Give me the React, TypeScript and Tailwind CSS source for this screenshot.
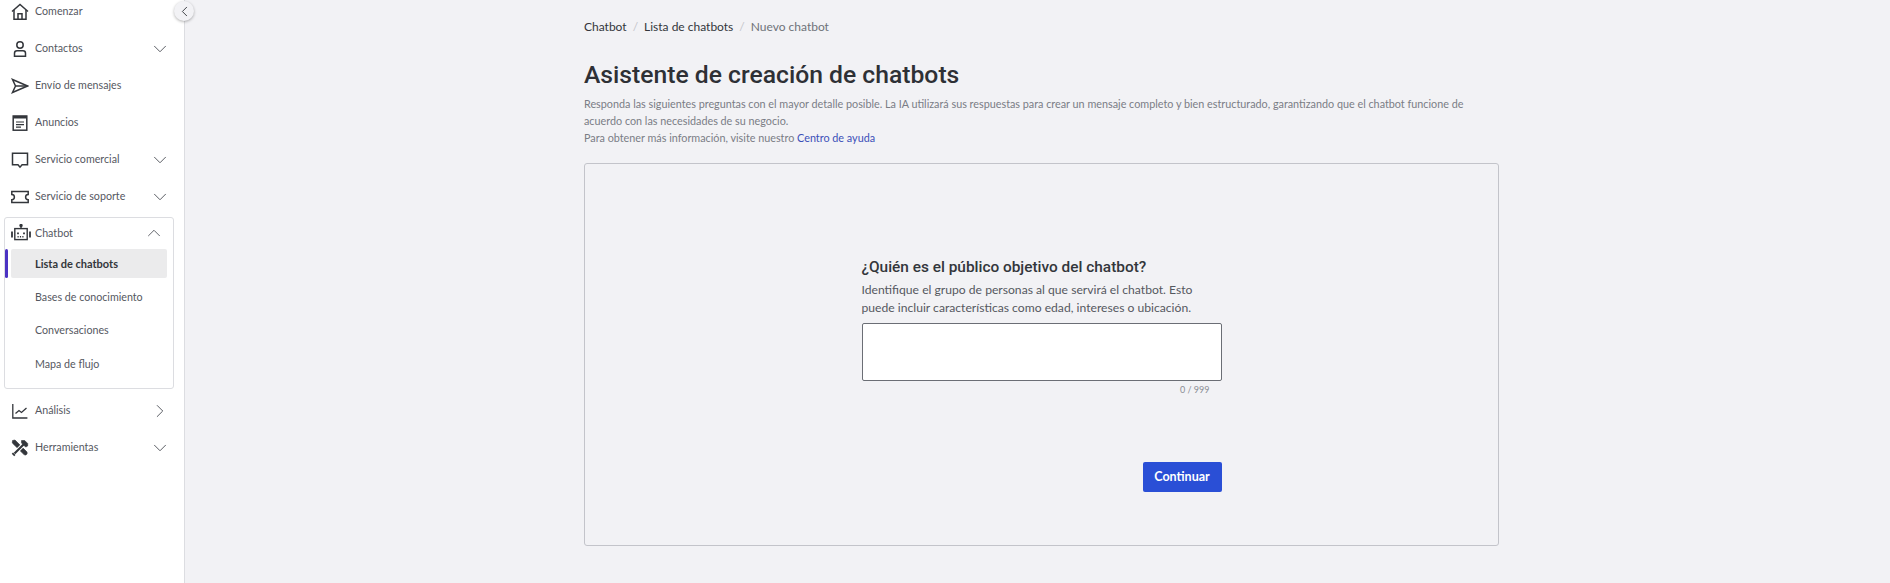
import React from "react";
import { ChevronDown, ChevronLeft, ChevronRight, ChevronUp } from "lucide-react";

const HomeIcon = () => (
  <svg width="18" height="18" viewBox="0 0 18 18" fill="none" stroke="#33363b" strokeWidth="1.5">
    <path d="M1 8.5 9 1.5l8 7" />
    <path d="M3 7v9.2h12V7" />
    <path d="M7 16v-5.2h4V16" />
  </svg>
);

const UserIcon = () => (
  <svg width="18" height="18" viewBox="0 0 18 18" fill="none" stroke="#33363b" strokeWidth="1.5">
    <circle cx="9" cy="5" r="3.2" />
    <path d="M3.5 16.2v-3a2.5 2.5 0 0 1 2.5-2.5h6a2.5 2.5 0 0 1 2.5 2.5v3z" />
  </svg>
);

const SendIcon = () => (
  <svg width="18" height="18" viewBox="0 0 18 18" fill="none" stroke="#33363b" strokeWidth="1.5">
    <path d="M1.5 2.5 16.5 9 1.5 15.5 4.5 9z" />
    <path d="M4.5 9h12" />
  </svg>
);

const NewsIcon = () => (
  <svg width="18" height="18" viewBox="0 0 18 18" fill="none" stroke="#33363b" strokeWidth="1.5">
    <rect x="2.2" y="2" width="13.6" height="14.2" />
    <path d="M2.2 3.2h13.6" strokeWidth="2.6" />
    <path d="M5 8h8M5 10.6h8M5 13.2h5" strokeWidth="1.2" />
  </svg>
);

const ChatIcon = () => (
  <svg width="18" height="18" viewBox="0 0 18 18" fill="none" stroke="#33363b" strokeWidth="1.5">
    <path d="M1.5 2.2h15v11.6h-5.4L9 16.2l-2-2.4H1.5z" />
  </svg>
);

const TicketIcon = () => (
  <svg width="18" height="18" viewBox="0 0 18 18" fill="none" stroke="#33363b" strokeWidth="1.5">
    <path d="M.8 3.5h16.4v3a2.6 2.6 0 0 0 0 5.2v2.8H.8v-2.8a2.6 2.6 0 0 0 0-5.2z" />
  </svg>
);

const RobotIcon = () => (
  <svg width="20" height="18" viewBox="0 0 20 18" fill="none" stroke="#33363b" strokeWidth="1.4">
    <rect x="3.8" y="4.6" width="12.4" height="11" />
    <path d="M10 1.5v3" />
    <circle cx="10" cy="1.5" r="1" fill="#33363b" />
    <path d="M1 7.5v6M19 7.5v6" strokeWidth="1.8" />
    <path d="M7 8.6v1.6M13 8.6v1.6" strokeWidth="1.8" />
    <path d="M6.5 12.8h7" strokeDasharray="1.2 1.2" />
  </svg>
);

const ChartIcon = () => (
  <svg width="18" height="18" viewBox="0 0 18 18" fill="none" stroke="#33363b" strokeWidth="1.3">
    <path d="M1.8 2v14h14.6" />
    <path d="M4.5 11.5 8 8.5l2.5 2 5-4.5" />
  </svg>
);

const ToolsIcon = () => (
  <svg width="18" height="18" viewBox="0 0 18 18" fill="none" stroke="#33363b">
    <path d="M1.5 1.5 4 1l11.8 11.8a2 2 0 0 1-2.8 2.8L1.3 4z" fill="#33363b" strokeWidth="0.6" />
    <path d="M14.5 3.5 3.5 14.5" stroke="#ffffff" strokeWidth="4" />
    <path d="M14.5 3.5 3.5 14.5" strokeWidth="2.2" />
    <path d="M10.5 1.5h3.2l3 3v2.4l-2 1.2-4.2-4.2z" fill="#33363b" strokeWidth="0.6" />
    <path d="M1.4 14.2l2.4 2.4" strokeWidth="1.8" />
  </svg>
);

type NavEntry = { label: string; icon: React.ReactNode; chevron?: "down" | "right" };

const topItems: NavEntry[] = [
  { label: "Comenzar", icon: <HomeIcon /> },
  { label: "Contactos", icon: <UserIcon />, chevron: "down" },
  { label: "Envío de mensajes", icon: <SendIcon /> },
  { label: "Anuncios", icon: <NewsIcon /> },
  { label: "Servicio comercial", icon: <ChatIcon />, chevron: "down" },
  { label: "Servicio de soporte", icon: <TicketIcon />, chevron: "down" },
];

const bottomItems: NavEntry[] = [
  { label: "Análisis", icon: <ChartIcon />, chevron: "right" },
  { label: "Herramientas", icon: <ToolsIcon />, chevron: "down" },
];

const subItems = ["Bases de conocimiento", "Conversaciones", "Mapa de flujo"];

const NavItem = ({ item }: { item: NavEntry }) => (
  <div className="flex h-[37px] items-center pl-[11px] pr-[13px] text-[10.7px] text-[#55585f]">
    <span className="flex w-[24px] shrink-0 justify-start">{item.icon}</span>
    <span className="flex-1">{item.label}</span>
    {item.chevron === "down" && <ChevronDown size={22} strokeWidth={1} className="text-[#4b4f56]" />}
    {item.chevron === "right" && <ChevronRight size={22} strokeWidth={1} className="text-[#4b4f56]" />}
  </div>
);

const App: React.FC = () => {
  return (
    <div className="flex h-[583px] overflow-hidden bg-[#f2f2f5] font-['Lato','Liberation_Sans',sans-serif]">
      <aside className="relative w-[185px] shrink-0 border-r border-[#dcdde1] bg-white">
        <div className="-mt-[7px]">
          {topItems.map((item) => (
            <NavItem key={item.label} item={item} />
          ))}
        </div>

        <div className="mx-[4px] mt-[2px] h-[172px] w-[170px] rounded-[3px] border border-[#dcdde1]">
          <div className="flex h-[30px] items-center pl-[6px] pr-[8px] text-[10.7px] text-[#55585f]">
            <span className="flex w-[24px] shrink-0">
              <RobotIcon />
            </span>
            <span className="flex-1">Chatbot</span>
            <ChevronUp size={22} strokeWidth={1} />
          </div>
          <div className="relative ml-[6px] mr-[6px] mt-[1px] flex h-[29px] items-center rounded-[2px] bg-[#ebebec] pl-[24px] pt-[1px] text-[11px] font-bold text-[#33363b]">
            <span className="absolute -left-[6px] top-0 h-[29px] w-[3px] rounded-[2px] bg-[#4b32c3]" />
            Lista de chatbots
          </div>
          {subItems.map((label, i) => (
            <div
              key={label}
              className={`flex h-[33.5px] items-center pl-[30px] pt-[2px] text-[10.7px] text-[#55585f] ${i === 0 ? "mt-[1px]" : ""}`}
            >
              {label}
            </div>
          ))}
        </div>

        <div className="mt-[3px]">
          {bottomItems.map((item) => (
            <NavItem key={item.label} item={item} />
          ))}
        </div>

        <button className="absolute -right-[10px] top-[1px] flex h-[20px] w-[20px] items-center justify-center rounded-full bg-[#f2f2f5] shadow-[0_1px_3px_rgba(0,0,0,0.3)]">
          <ChevronLeft size={17} strokeWidth={1.3} className="text-[#33363b]" />
        </button>
      </aside>

      <main className="flex-1 pl-[399px]">
        <div className="w-[915px]">
          <nav className="mt-[18px] flex h-[18px] items-center gap-[6px] text-[12px] text-[#33363b]">
            <span>Chatbot</span>
            <span className="text-[#c4c5ca]">/</span>
            <span>Lista de chatbots</span>
            <span className="text-[#c4c5ca]">/</span>
            <span className="text-[#6f7279]">Nuevo chatbot</span>
          </nav>

          <h1 className="mt-[21px] h-[35px] font-['Roboto',sans-serif] text-[24.7px] font-medium leading-[35px] text-[#2e3035]">
            Asistente de creación de chatbots
          </h1>

          <p className="mt-[3px] text-[10.8px] leading-[17px] text-[#7a7d85]">
            Responda las siguientes preguntas con el mayor detalle posible. La IA utilizará sus respuestas para crear un mensaje completo y bien estructurado, garantizando que el chatbot funcione de acuerdo con las necesidades de su negocio.
            <br />
            Para obtener más información, visite nuestro <span className="text-[#3b4fb8]">Centro de ayuda</span>
          </p>

          <section className="mt-[17px] flex h-[383px] w-[915px] justify-center rounded-[3px] border border-[#c3c4ca]">
            <div className="mt-[92px] w-[360px]">
              <h2 className="font-['Roboto',sans-serif] text-[15.4px] font-medium leading-[22px] text-[#33363b]">
                ¿Quién es el público objetivo del chatbot?
              </h2>
              <p className="mt-[3px] text-[12.15px] leading-[18px] text-[#55585f]">
                Identifique el grupo de personas al que servirá el chatbot. Esto puede incluir características como edad, intereses o ubicación.
              </p>
              <textarea className="mt-[6px] block h-[58px] w-[360px] resize-none rounded-[2px] border border-[#6b6e75] bg-white" />
              <div className="mt-[3px] pr-[12px] text-right text-[9px] leading-[12px] text-[#8a8d94]">0 / 999</div>
              <div className="mt-[66px] flex justify-end">
                <button className="h-[30px] w-[79px] rounded-[2px] bg-[#2a4fd6] text-[12.5px] font-bold text-white">
                  Continuar
                </button>
              </div>
            </div>
          </section>
        </div>
      </main>
    </div>
  );
};

export default App;
